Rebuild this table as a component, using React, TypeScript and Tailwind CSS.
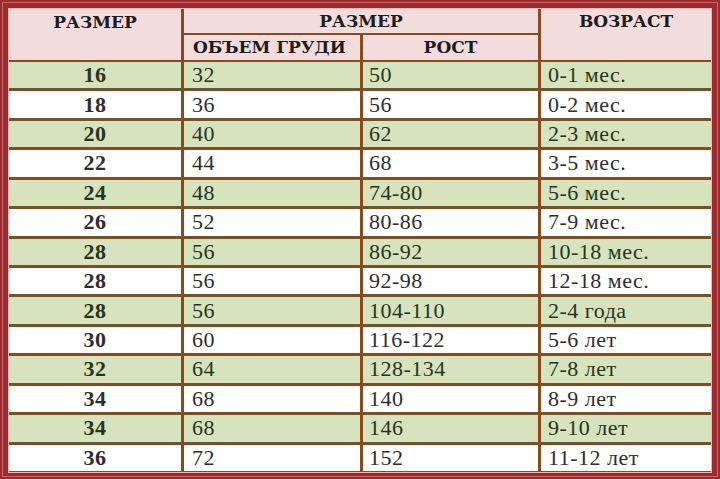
const ROWS = [
  ["16", "32", "50", "0-1 мес."],
  ["18", "36", "56", "0-2 мес."],
  ["20", "40", "62", "2-3 мес."],
  ["22", "44", "68", "3-5 мес."],
  ["24", "48", "74-80", "5-6 мес."],
  ["26", "52", "80-86", "7-9 мес."],
  ["28", "56", "86-92", "10-18 мес."],
  ["28", "56", "92-98", "12-18 мес."],
  ["28", "56", "104-110", "2-4 года"],
  ["30", "60", "116-122", "5-6 лет"],
  ["32", "64", "128-134", "7-8 лет"],
  ["34", "68", "140", "8-9 лет"],
  ["34", "68", "146", "9-10 лет"],
  ["36", "72", "152", "11-12 лет"],
];

const head =
  "bg-[#f3dcdc] text-[17px] leading-none font-bold text-[#1c1c1c] [font-family:'DejaVu_Serif',serif]";

export default function App() {
  return (
    <div
      className="h-[479px] w-[720px] overflow-hidden bg-[#9b2b2e] p-[2px]"
      style={{ fontFamily: '"Liberation Serif", "DejaVu Serif", serif' }}
    >
      <div className="h-full w-full border border-[#c86a6a] bg-[#9b2b2e] px-[5px] pb-[3px] pt-[5px]">
        <div className="h-full w-full border border-[#e9b9b6] bg-[#8a4a1e]">
          <div className="grid h-full grid-cols-[172px_176px_175px_1fr] grid-rows-[24px_25px_repeat(14,minmax(0,1fr))] gap-x-[3px] gap-y-[2px]">
            <div className={`row-span-2 flex justify-center pt-[5px] ${head}`}>РАЗМЕР</div>
            <div className={`col-span-2 flex items-center justify-center ${head}`}>РАЗМЕР</div>
            <div className={`row-span-2 flex justify-center pt-[4px] ${head}`}>ВОЗРАСТ</div>
            <div className={`flex items-center pl-[9px] ${head}`}>ОБЪЕМ ГРУДИ</div>
            <div className={`flex items-center justify-center ${head}`}>РОСТ</div>

            {ROWS.map((row, i) => {
              const green = i % 2 === 0;
              const cell = green
                ? "bg-[#d6e3bc] text-[#27351f] border-b border-[#5e5a3c] leading-none tracking-[0.5px]"
                : "bg-white text-[#2e2e2e] border-b border-[#5e5a3c] leading-none tracking-[0.5px]";
              return [
                <div
                  key={`a${i}`}
                  className={`flex items-center justify-center text-[22px] font-bold ${cell}`}
                >
                  {row[0]}
                </div>,
                <div key={`b${i}`} className={`flex items-center pl-[8px] text-[22px] ${cell}`}>
                  {row[1]}
                </div>,
                <div key={`c${i}`} className={`flex items-center pl-[6px] text-[22px] ${cell}`}>
                  {row[2]}
                </div>,
                <div key={`d${i}`} className={`flex items-center pl-[7px] text-[22px] ${cell}`}>
                  {row[3]}
                </div>,
              ];
            })}
          </div>
        </div>
      </div>
    </div>
  );
}
